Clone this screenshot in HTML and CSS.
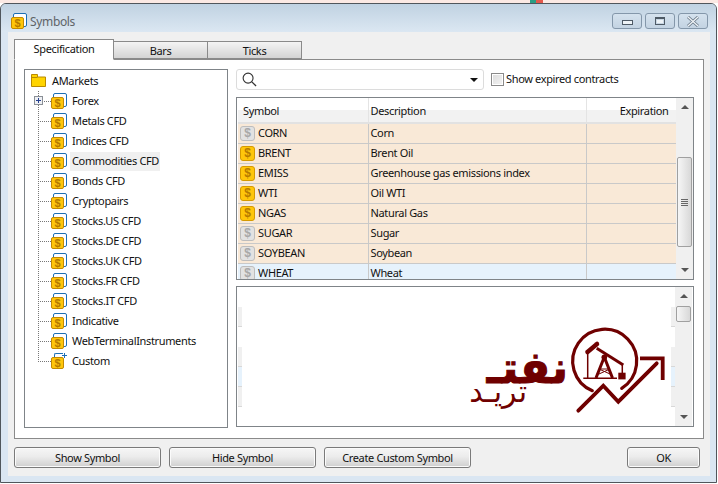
FILE: index.html
```html
<!DOCTYPE html>
<html lang="en">
<head>
  <meta charset="UTF-8" />
  <meta name="viewport" content="width=device-width, initial-scale=1.0" />
  <title>Symbols</title>
  <link rel="stylesheet" href="styles.css">
</head>
<body>
  <div class="desktop-strip"></div>

  <div class="window">
    <!-- Title bar -->
    <div class="titlebar">
      <span class="coin coin-group"><span class="coin-face">$</span></span>
      <span class="title-text">Symbols</span>
      <div class="caption-buttons">
        <div class="caption-btn"><span class="glyph-min"></span></div>
        <div class="caption-btn"><span class="glyph-max"></span></div>
        <div class="caption-btn">
          <svg class="glyph-close" viewBox="0 0 14 11">
            <path d="M2 1l10 9M12 1L2 10" stroke="#6d7c8b" stroke-width="3" fill="none"/>
            <path d="M2 1l10 9M12 1L2 10" stroke="#f2f6f9" stroke-width="1.200" fill="none"/>
          </svg>
        </div>
      </div>
    </div>

    <div class="client">
      <!-- Tabs -->
      <div class="tabs">
        <div class="tab tab-active">Specification</div>
        <div class="tab">Bars</div>
        <div class="tab">Ticks</div>
      </div>

      <div class="tab-panel">
        <!-- Market tree -->
        <div class="tree">
          <div class="tree-root">
            <svg class="folder-icon" viewBox="0 0 15 13"><path d="M0.500 12.500V0.500h6v2.500h8v9.500z" fill="#ffd400" stroke="#b98a00"/><path d="M1 3.500h5.500" stroke="#b98a00"/></svg>
            <span>AMarkets</span>
          </div>
          <div class="tree-row">
            <span class="branch"><span class="expander"></span></span>
            <span class="coin coin-group"><span class="coin-face">$</span></span><span class="tree-label">Forex</span>
          </div>
          <div class="tree-row"><span class="branch"></span><span class="coin coin-group"><span class="coin-face">$</span></span><span class="tree-label">Metals CFD</span></div>
          <div class="tree-row"><span class="branch"></span><span class="coin coin-group"><span class="coin-face">$</span></span><span class="tree-label">Indices CFD</span></div>
          <div class="tree-row"><span class="branch"></span><span class="coin coin-group"><span class="coin-face">$</span></span><span class="tree-label tree-selected">Commodities CFD</span></div>
          <div class="tree-row"><span class="branch"></span><span class="coin coin-group"><span class="coin-face">$</span></span><span class="tree-label">Bonds CFD</span></div>
          <div class="tree-row"><span class="branch"></span><span class="coin coin-group"><span class="coin-face">$</span></span><span class="tree-label">Cryptopairs</span></div>
          <div class="tree-row"><span class="branch"></span><span class="coin coin-group"><span class="coin-face">$</span></span><span class="tree-label">Stocks.US CFD</span></div>
          <div class="tree-row"><span class="branch"></span><span class="coin coin-group"><span class="coin-face">$</span></span><span class="tree-label">Stocks.DE CFD</span></div>
          <div class="tree-row"><span class="branch"></span><span class="coin coin-group"><span class="coin-face">$</span></span><span class="tree-label">Stocks.UK CFD</span></div>
          <div class="tree-row"><span class="branch"></span><span class="coin coin-group"><span class="coin-face">$</span></span><span class="tree-label">Stocks.FR CFD</span></div>
          <div class="tree-row"><span class="branch"></span><span class="coin coin-group"><span class="coin-face">$</span></span><span class="tree-label">Stocks.IT CFD</span></div>
          <div class="tree-row"><span class="branch"></span><span class="coin coin-group"><span class="coin-face">$</span></span><span class="tree-label">Indicative</span></div>
          <div class="tree-row"><span class="branch"></span><span class="coin coin-group"><span class="coin-face">$</span></span><span class="tree-label">WebTerminalInstruments</span></div>
          <div class="tree-row"><span class="branch branch-last"></span><span class="coin coin-custom"><span class="coin-face">$</span></span><span class="tree-label">Custom</span></div>
        </div>

        <div class="right-col">
          <!-- Search row -->
          <div class="search-row">
            <div class="search-box">
              <svg class="search-icon" viewBox="0 0 16 16"><circle cx="6.500" cy="6.500" r="5.300" fill="none" stroke="#333" stroke-width="1.200"/><path d="M10.500 10.500l4.500 4.500" stroke="#333" stroke-width="1.400"/></svg>
              <span class="combo-arrow"></span>
            </div>
            <label class="check-label"><span class="checkbox"></span><span class="check-text">Show expired contracts</span></label>
          </div>

          <!-- Symbols table -->
          <div class="symbols">
            <div class="table-clip">
              <table class="symbol-table">
                <colgroup><col class="col-symbol"><col class="col-desc"><col class="col-exp"></colgroup>
                <thead>
                  <tr><th>Symbol</th><th class="th-desc">Description</th><th class="th-exp">Expiration</th></tr>
                </thead>
                <tbody>
                  <tr><td><div class="sym"><span class="coin-row coin-off">$</span>CORN</div></td><td>Corn</td><td></td></tr>
                  <tr><td><div class="sym"><span class="coin-row">$</span>BRENT</div></td><td>Brent Oil</td><td></td></tr>
                  <tr><td><div class="sym"><span class="coin-row">$</span>EMISS</div></td><td>Greenhouse gas emissions index</td><td></td></tr>
                  <tr><td><div class="sym"><span class="coin-row">$</span>WTI</div></td><td>Oil WTI</td><td></td></tr>
                  <tr><td><div class="sym"><span class="coin-row">$</span>NGAS</div></td><td>Natural Gas</td><td></td></tr>
                  <tr><td><div class="sym"><span class="coin-row coin-off">$</span>SUGAR</div></td><td>Sugar</td><td></td></tr>
                  <tr><td><div class="sym"><span class="coin-row coin-off">$</span>SOYBEAN</div></td><td>Soybean</td><td></td></tr>
                  <tr class="row-blue"><td><div class="sym"><span class="coin-row coin-off">$</span>WHEAT</div></td><td>Wheat</td><td></td></tr>
                </tbody>
              </table>
            </div>
            <div class="scrollbar">
              <span class="arrow-up"></span>
              <div class="track track-main"><div class="thumb thumb-main"><span class="grip"></span></div></div>
              <span class="arrow-down"></span>
            </div>
          </div>

          <!-- Detail pane with watermark logo on top -->
          <div class="detail">
            <div class="ghost ghost-left">
              <i></i><b></b><i></i><i class="blue"></i><i></i>
            </div>
            <div class="detail-space"></div>
            <div class="ghost ghost-right">
              <i></i><b></b><i></i><i class="blue"></i><i></i>
            </div>
            <div class="scrollbar scrollbar-detail">
              <span class="arrow-up"></span>
              <div class="track"><div class="thumb thumb-detail"></div></div>
              <span class="arrow-down"></span>
            </div>

            <div class="logo">
              <span class="logo-big" dir="rtl">نفتـ</span>
              <span class="logo-small" dir="rtl">تریـد</span>
              <svg class="logo-mark" viewBox="0 0 105 95">
                <path d="M27.300 70.700A32 32 0 1 1 56.700 68.300" fill="none" stroke="#6f0000" stroke-width="3.200" stroke-linecap="round"/>
                <path d="M13.300 90.700L38.300 65.700 53.300 81.700 91.700 43.300" fill="none" stroke="#6f0000" stroke-width="3.800" stroke-linecap="round"/>
                <path d="M75 38.300H97.700V60" fill="none" stroke="#6f0000" stroke-width="3.800"/>
                <!-- pump jack -->
                <path d="M22.500 32L32 24" stroke="#6f0000" stroke-width="4.500" stroke-linecap="round"/>
                <path d="M31.700 28.300L58.300 45" stroke="#6f0000" stroke-width="3"/>
                <path d="M22.700 33V58M18.300 58.300H52M57.300 45V53" stroke="#6f0000" stroke-width="1.500" fill="none"/>
                <path d="M39.300 37L31 58M39.300 37L47.500 58" stroke="#6f0000" stroke-width="3" fill="none"/>
                <path d="M35 49H44M34 54L45 49M45 54L34 49" stroke="#6f0000" stroke-width="1" fill="none"/>
                <circle cx="39.300" cy="37.300" r="2.800" fill="#6f0000"/>
                <rect x="53.300" y="52.700" width="7.300" height="6.700" fill="#6f0000"/>
              </svg>
            </div>
          </div>
        </div>
      </div>

      <!-- Dialog buttons -->
      <div class="dialog-buttons">
        <button type="button" class="btn btn-wide">Show Symbol</button>
        <button type="button" class="btn btn-wide">Hide Symbol</button>
        <button type="button" class="btn btn-wide">Create Custom Symbol</button>
        <button type="button" class="btn btn-ok">OK</button>
      </div>
    </div>
  </div>
</body>
</html>
```

FILE: styles.css
```css
* {
  box-sizing: border-box;
}
body {
  margin: 0;
  width: 718px;
  height: 484px;
  overflow: hidden;
  background: #fff;
  font-family: "Noto Sans", Arial, sans-serif;
  font-size: 11px;
  letter-spacing: -0.35px;
  color: #111;
}

.desktop-strip {
  height: 3px;
  background: linear-gradient(to right, #fbe9e4 0 530px, #2a9d84 530px 536px, #e4584c 536px 543px, #fbe9e4 543px);
}

/* Coin icons */
.coin {
  position: relative;
  display: block;
  flex: none;
  width: 16px;
  height: 16px;
}
.coin-group::before {
  content: "";
  position: absolute;
  right: 0;
  top: 0;
  width: 12px;
  height: 12px;
  border: 1px solid #1c6fb5;
  border-radius: 2px;
  background: #fff;
}
.coin-custom::before {
  content: "";
  position: absolute;
  left: 3px;
  top: 0;
  width: 8px;
  height: 6px;
  border: 1px solid #1c6fb5;
  border-width: 1px 0 0 1px;
  border-radius: 2px 0 0 0;
}
.coin-custom::after {
  content: "";
  position: absolute;
  right: 0;
  top: 0;
  width: 5px;
  height: 5px;
  background:
    linear-gradient(#1c6fb5, #1c6fb5) center / 5px 1px no-repeat,
    linear-gradient(#1c6fb5, #1c6fb5) center / 1px 5px no-repeat;
}
.coin-face {
  position: absolute;
  left: 0;
  bottom: 0;
  width: 13px;
  height: 12px;
  line-height: 11px;
  text-align: center;
  border: 1px solid #c48a00;
  border-radius: 2px;
  background: #ffc60b;
  color: #b57a00;
  font-family: "Liberation Sans", Arial, sans-serif;
  font-size: 11px;
  font-weight: bold;
  letter-spacing: 0;
}
.coin-row {
  flex: none;
  width: 15px;
  height: 15px;
  margin-right: 3px;
  line-height: 13px;
  text-align: center;
  border: 1px solid #d59a00;
  border-radius: 3px;
  background: #ffc60b;
  color: #b57a00;
  font-family: "Liberation Sans", Arial, sans-serif;
  font-size: 12px;
  font-weight: bold;
  letter-spacing: 0;
}
.coin-off {
  border-color: #bdbdbd;
  background: #e2e2e2;
  color: #a8a8a8;
}

/* Window frame */
.window {
  width: 717px;
  height: 480px;
  display: flex;
  flex-direction: column;
  border: 1px solid #50565c;
  border-radius: 6px 6px 0 0;
  background: #dae6f2;
  padding: 0 6px 6px 7px;
}
.titlebar {
  height: 28px;
  margin: 0 -6px 0 -7px;
  padding: 6px 8px 0 10px;
  display: flex;
  align-items: center;
  background: linear-gradient(to bottom, #c0d2e2, #dbe7f2);
  border-radius: 5px 5px 0 0;
}
.title-text {
  margin-left: 3px;
  font-size: 12px;
  color: #5f6468;
}
.caption-buttons {
  margin-left: auto;
  display: flex;
  gap: 3px;
}
.caption-btn {
  width: 30px;
  height: 16px;
  display: flex;
  align-items: center;
  justify-content: center;
  border: 1px solid #8497aa;
  border-radius: 3px;
  background: linear-gradient(to bottom, #d5e2ee, #c3d3e2);
}
.glyph-min {
  width: 11px;
  height: 5px;
  margin-top: 3px;
  border: 1px solid #4e5a66;
  background: #eef3f7;
}
.glyph-max {
  width: 10px;
  height: 8px;
  border: 1px solid #4e5a66;
  border-top-width: 2px;
  background: #eef3f7;
  box-shadow: inset 0 0 0 1px #c9d7e4;
}
.glyph-close {
  width: 14px;
  height: 11px;
}

/* Dialog body */
.client {
  flex: 1;
  padding: 7px 6px 8px;
  background: #f0f0f0;
  display: flex;
  flex-direction: column;
}
.tabs {
  display: flex;
  height: 21px;
  align-items: flex-end;
  position: relative;
  z-index: 1;
  margin-bottom: -1px;
}
.tab {
  width: 94px;
  height: 18px;
  margin-bottom: 1px;
  line-height: 17px;
  text-align: center;
  border: 1px solid #8a8a8a;
  border-left-width: 0;
  background: linear-gradient(to bottom, #f4f4f4, #d4d4d4);
}
.tab-active {
  width: 100px;
  height: 21px;
  margin-bottom: 0;
  line-height: 18px;
  border-left-width: 1px;
  border-bottom: 1px solid #fff;
  background: #fff;
}
.tab-panel {
  height: 380px;
  padding: 9px 9px 10px;
  display: flex;
  gap: 8px;
  background: #fff;
  border: 1px solid #8a8a8a;
}

/* Market tree */
.tree {
  width: 204px;
  border: 1px solid #7f8488;
  padding: 1px 0 0 6px;
}
.tree-root {
  height: 20px;
  padding-bottom: 2px;
  display: flex;
  align-items: center;
  gap: 6px;
}
.folder-icon {
  width: 15px;
  height: 13px;
}
.tree-row {
  height: 20px;
  display: flex;
  align-items: center;
  padding-left: 7px;
}
.branch {
  position: relative;
  width: 13px;
  height: 20px;
  background:
    repeating-linear-gradient(to bottom, #777 0 1px, transparent 1px 2px) left top / 1px 100% no-repeat,
    repeating-linear-gradient(to right, #777 0 1px, transparent 1px 2px) left center / 100% 1px no-repeat;
}
.branch-last {
  background:
    repeating-linear-gradient(to bottom, #777 0 1px, transparent 1px 2px) left top / 1px 50% no-repeat,
    repeating-linear-gradient(to right, #777 0 1px, transparent 1px 2px) left center / 100% 1px no-repeat;
}
.expander {
  position: absolute;
  left: -4px;
  top: 5px;
  width: 9px;
  height: 9px;
  border: 1px solid #8a8f96;
  background:
    linear-gradient(#26418f, #26418f) center / 5px 1px no-repeat,
    linear-gradient(#26418f, #26418f) center / 1px 5px no-repeat,
    #eef0f4;
}
.tree-label {
  margin-left: 3px;
  padding: 0 1px 0 2px;
  height: 19px;
  line-height: 18px;
}
.tree-selected {
  background: #f0f0f0;
}

/* Right column */
.right-col {
  width: 458px;
  display: flex;
  flex-direction: column;
}
.search-row {
  height: 21px;
  display: flex;
  align-items: center;
  gap: 7px;
  margin-bottom: 7px;
}
.search-box {
  width: 248px;
  height: 21px;
  display: flex;
  align-items: center;
  justify-content: space-between;
  padding: 0 5px 0 5px;
  border: 1px solid #dcdcdc;
  border-radius: 3px;
}
.search-icon {
  width: 15px;
  height: 15px;
}
.combo-arrow {
  width: 0;
  height: 0;
  border-left: 4px solid transparent;
  border-right: 4px solid transparent;
  border-top: 4px solid #111;
}
.check-label {
  display: flex;
  align-items: center;
  gap: 2px;
}
.check-text {
  padding-bottom: 2px;
}
.checkbox {
  width: 13px;
  height: 13px;
  border: 1px solid #8a8a8a;
  background: linear-gradient(135deg, #dcdcdc, #f4f4f4);
  box-shadow: inset 0 0 0 1px #fff;
}

/* Symbols table */
.symbols {
  height: 183px;
  margin-bottom: 6px;
  display: flex;
  border: 1px solid #7f8488;
  padding-left: 1px;
}
.table-clip {
  width: 439px;
  height: 181px;
  overflow: hidden;
}
.symbol-table {
  width: 439px;
  table-layout: fixed;
  border-collapse: collapse;
}
.col-symbol { width: 130px; }
.col-desc { width: 218px; }
.col-exp { width: 91px; }
.symbol-table th {
  height: 25px;
  font-weight: normal;
  text-align: left;
  padding: 1px 0 0 5px;
  background: linear-gradient(to bottom, #fff 0 50%, #f2f2f2 50%);
  border-right: 1px solid #e4e4e4;
  border-bottom: 2px solid #e2e2e2;
}
.symbol-table .th-desc {
  padding-left: 2px;
}
.symbol-table .th-exp {
  text-align: right;
  padding-right: 8px;
}
.symbol-table td {
  height: 20px;
  padding: 0 0 1px 2px;
  line-height: 18px;
  background: #f9e9d7;
  border-right: 1px solid #c9c9c9;
  border-bottom: 1px solid #c9c9c9;
  white-space: nowrap;
}
.symbol-table .row-blue td {
  background: #e6f2fc;
}
.sym {
  height: 18px;
  display: flex;
  align-items: center;
}

/* Scrollbars */
.scrollbar {
  width: 17px;
  display: flex;
  flex-direction: column;
  align-items: center;
  background: #f0f0f0;
  padding: 7px 0 7px;
}
.arrow-up,
.arrow-down {
  width: 0;
  height: 0;
  flex: none;
  border-left: 4px solid transparent;
  border-right: 4px solid transparent;
}
.arrow-up {
  border-bottom: 4px solid #555;
}
.arrow-down {
  border-top: 4px solid #555;
}
.track {
  flex: 1;
  width: 100%;
}
.track-main {
  padding-top: 48px;
}
.thumb {
  margin: 0 auto;
  width: 15px;
  display: flex;
  align-items: center;
  justify-content: center;
  border: 1px solid #a0a0a0;
  border-radius: 2px;
  background: linear-gradient(to right, #f6f6f6, #d8d8d8);
}
.thumb-main {
  height: 90px;
}
.grip {
  width: 7px;
  height: 7px;
  background: repeating-linear-gradient(to bottom, #666 0 1px, transparent 1px 2px);
}
.thumb-detail {
  height: 16px;
  margin-top: 8px;
}

/* Detail pane */
.detail {
  position: relative;
  height: 141px;
  display: flex;
  border: 1px solid #7f8488;
  background: #fff;
  padding-left: 1px;
}
.detail-space {
  flex: 1;
}
.ghost {
  width: 4px;
  padding-top: 20px;
  display: flex;
  flex-direction: column;
}
.ghost i {
  display: block;
  height: 20px;
  background: #f0f0f0;
  border-bottom: 1px solid #d8d8d8;
}
.ghost b {
  display: block;
  height: 20px;
}
.ghost .blue {
  background: #e6f2fc;
}
.scrollbar-detail {
  width: 17px;
  margin-right: 1px;
}

/* Watermark logo */
.logo {
  position: absolute;
  left: 233px;
  top: 33px;
  width: 200px;
  height: 95px;
  color: #6f0000;
  font-family: "DejaVu Sans", sans-serif;
  letter-spacing: 0;
}
.logo-big {
  position: absolute;
  right: 102px;
  top: 33px;
  font-size: 44px;
  font-weight: bold;
  line-height: 30px;
  white-space: nowrap;
  -webkit-text-stroke: 1px #6f0000;
}
.logo-small {
  position: absolute;
  right: 143px;
  top: 62px;
  font-size: 30px;
  line-height: 20px;
  white-space: nowrap;
}
.logo-mark {
  position: absolute;
  left: 95px;
  top: 0;
  width: 105px;
  height: 95px;
}

/* Bottom buttons */
.dialog-buttons {
  display: flex;
  gap: 8px;
  margin-top: 8px;
}
.btn {
  height: 21px;
  padding: 0;
  font: inherit;
  letter-spacing: inherit;
  color: #111;
  border: 1px solid #7a7a7a;
  border-radius: 3px;
  background: linear-gradient(to bottom, #f6f6f6, #ececec 45%, #cfcfcf);
  box-shadow: inset 0 0 0 1px #fbfbfb;
}
.btn-wide {
  width: 147px;
}
.btn-ok {
  width: 73px;
  margin-left: auto;
  margin-right: 4px;
}
```
